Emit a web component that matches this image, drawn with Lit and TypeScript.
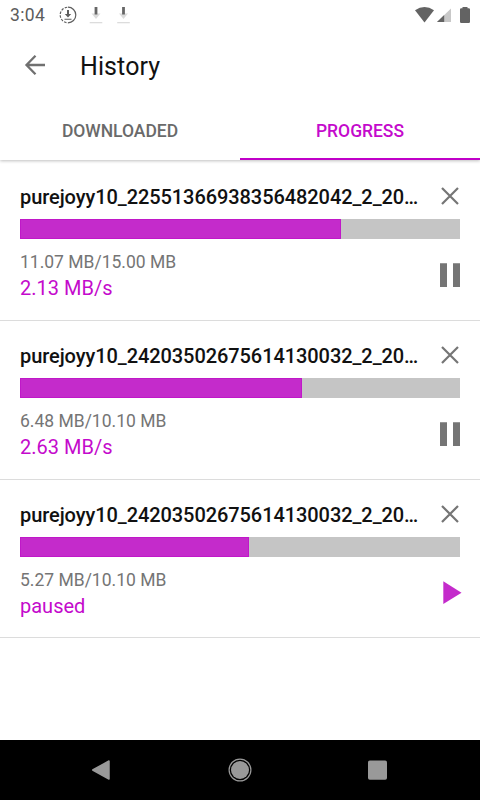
import { LitElement, html, css, svg } from "lit";
import { customElement, property } from "lit/decorators.js";

interface Download {
  name: string;
  size: string;
  status: string;
  percent: number;
  paused: boolean;
}

const downloads: Download[] = [
  { name: "purejoyy10_22551366938356482042_2_20…", size: "11.07 MB/15.00 MB", status: "2.13 MB/s", percent: 73, paused: false },
  { name: "purejoyy10_24203502675614130032_2_20…", size: "6.48 MB/10.10 MB", status: "2.63 MB/s", percent: 64, paused: false },
  { name: "purejoyy10_24203502675614130032_2_20…", size: "5.27 MB/10.10 MB", status: "paused", percent: 52.1, paused: true },
];

@customElement("download-row")
export class DownloadRow extends LitElement {
  @property({ attribute: false }) item!: Download;

  static styles = css`
    :host {
      display: block;
      box-sizing: border-box;
      height: 158.8px;
      padding: 20px 20px 0;
      border-bottom: 1.25px solid #dcdcdc;
    }
    .head, .foot { display: flex; justify-content: space-between; }
    .head { height: 28px; align-items: center; }
    .name {
      font-size: 20px;
      font-weight: 500;
      line-height: 28px;
      padding-top: 2px;
      color: #111;
      letter-spacing: -0.075px;
      white-space: nowrap;
    }
    .close { width: 20px; height: 20px; display: block; }
    .track { margin-top: 9px; height: 20px; background: #c5c5c5; }
    .fill {
      box-sizing: border-box;
      height: 100%;
      background: #c42bcb;
      border: 1px solid #c018c8;
    }
    .foot { margin-top: 11px; }
    .size { font-size: 17.5px; line-height: 25px; color: #757575; }
    .status { font-size: 20px; line-height: 26px; color: #c40acc; }
    .action { display: block; width: 22px; height: 26px; margin: 12px -2px 0 0; }
  `;

  render() {
    const d = this.item;
    return html`
      <div class="head">
        <div class="name">${d.name}</div>
        <svg class="close" viewBox="0 0 20 20"><path d="M2 2 18 18M18 2 2 18" stroke="#757575" stroke-width="2.2" fill="none"/></svg>
      </div>
      <div class="track"><div class="fill" style="width:${d.percent}%"></div></div>
      <div class="foot">
        <div>
          <div class="size">${d.size}</div>
          <div class="status">${d.status}</div>
        </div>
        <svg class="action" viewBox="0 0 22 26">
          ${d.paused
            ? svg`<path d="M3.3 1.200 21.500 12.700 3.300 24z" fill="#c42bcb"/>`
            : svg`<path d="M0 1.300h7v23.700H0zM13 1.300h7v23.700h-7z" fill="#757575"/>`}
        </svg>
      </div>
    `;
  }
}

@customElement("app-root")
export class AppRoot extends LitElement {
  static styles = css`
    :host {
      display: flex;
      flex-direction: column;
      width: 480px;
      height: 800px;
      overflow: hidden;
      background: #fff;
      font-family: Roboto, sans-serif;
    }
    svg { display: block; }
    .statusbar { height: 30px; flex: none; display: flex; justify-content: space-between; }
    .clock { font-size: 17.5px; line-height: 31px; color: #5c5c5c; padding-left: 10px; width: 48px; letter-spacing: 0.4px; }
    .left { display: flex; }
    .toolbar { height: 70px; flex: none; display: flex; align-items: center; padding-left: 20px; }
    .title { margin-left: 30px; font-size: 25px; line-height: 30px; padding-top: 4px; color: #111; letter-spacing: 0.1px; }
    .tabs {
      height: 60px;
      flex: none;
      display: flex;
      box-shadow: 0 1px 3px rgba(0, 0, 0, 0.25);
      clip-path: inset(0 0 -6px 0);
      z-index: 1;
    }
    .tab {
      flex: 1;
      box-sizing: border-box;
      text-align: center;
      font-size: 17.5px;
      font-weight: 500;
      letter-spacing: -0.03px;
      line-height: 62px;
      color: #6a6a6a;
    }
    .tab.active { color: #c40acc; border-bottom: 2.5px solid #c000c8; }
    .list { flex: 1; padding-top: 2px; }
    .nav { height: 60px; flex: none; background: #000; }
  `;

  render() {
    return html`
      <div class="statusbar">
        <div class="left">
          <div class="clock">3:04</div>
          <svg width="80" height="30" viewBox="58 0 80 30">
            <circle cx="68" cy="15" r="7.8" fill="none" stroke="#5e5e5e" stroke-width="1.2" stroke-dasharray="24.500 1.400 2.500 1.400 2.500 1.400 2.500 1.400 2.500 1.400 2.500 1.400 2.500 1.400" transform="rotate(-90 68 15)"/>
            <path d="M67 10h2v4h2.200L68 17.400 64.800 14H67zM64.500 18.700h7v1.100h-7z" fill="#5e5e5e"/>
            ${[96, 123.5].map((x) => svg`
              <g transform="translate(${x} 0)">
                <path d="M-4.500 13.500h9L0 19z" fill="#dcdcdc"/>
                <path d="M-1.400 7h2.800v7.500h-2.800z" fill="#666"/>
                <path d="M-6.300 22h12.600v1.300H-6.300z" fill="#dcdcdc"/>
              </g>`)}
          </svg>
        </div>
        <svg width="70" height="30" viewBox="410 0 70 30">
          <path d="M415 10.300Q424.500 3.800 434 10.300L424.500 22.500z" fill="#636363"/>
          <path d="M451 8.500V22H437z" fill="#c8c8c8"/>
          <path d="M444.200 15V22H437z" fill="#636363"/>
          <path d="M462.500 8.300V7h5v1.300h1.300q1.200 0 1.200 1.200v12.300q0 1.200-1.200 1.200h-7.600q-1.200 0-1.200-1.200V9.500q0-1.200 1.200-1.200z" fill="#636363"/>
        </svg>
      </div>
      <div class="toolbar">
        <svg width="30" height="30" viewBox="0 0 30 30"><path d="M25 15H7M15.500 5.800 6.500 15l9 9.200" fill="none" stroke="#707070" stroke-width="2.300"/></svg>
        <div class="title">History</div>
      </div>
      <div class="tabs">
        <div class="tab">DOWNLOADED</div>
        <div class="tab active">PROGRESS</div>
      </div>
      <div class="list">${downloads.map((d) => html`<download-row .item=${d}></download-row>`)}</div>
      <div class="nav">
        <svg width="480" height="60" viewBox="0 0 480 60">
          <path d="M109 21v18L92.700 30z" fill="#999" stroke="#999" stroke-width="1.500" stroke-linejoin="round"/>
          <circle cx="240" cy="30" r="9" fill="#999"/>
          <circle cx="240" cy="30" r="10.900" fill="none" stroke="#999" stroke-width="1.200"/>
          <rect x="368" y="20.500" width="19" height="19.300" rx="1.800" fill="#999"/>
        </svg>
      </div>
    `;
  }
}
